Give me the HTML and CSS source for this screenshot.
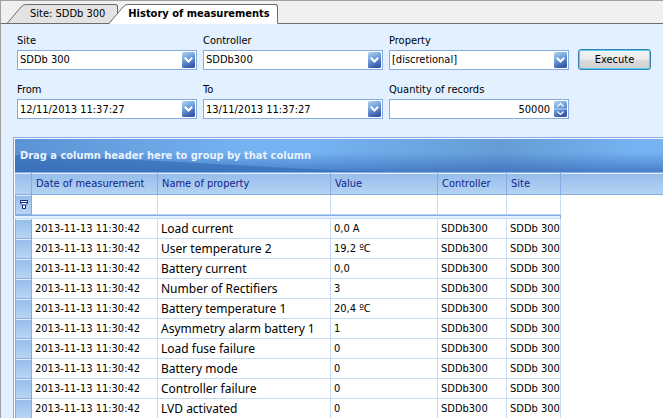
FILE: index.html
```html
<!DOCTYPE html>
<html lang="en">
<head>
<meta charset="utf-8">
<title>History of measurements</title>
<link rel="stylesheet" href="styles.css">
</head>
<body>
<svg class="defs" aria-hidden="true">
  <defs>
    <linearGradient id="blue" x1="0" y1="0" x2="0.4" y2="1">
      <stop offset="0" stop-color="#b4d3f2"/><stop offset="0.5" stop-color="#6fa0da"/><stop offset="1" stop-color="#3a5bac"/>
    </linearGradient>
    <symbol id="drop" viewBox="0 0 13 16">
      <rect width="13" height="16" rx="1.5" fill="url(#blue)"/>
      <path d="M2.8 5.8 6.5 9.5 10.2 5.8" fill="none" stroke="#fff" stroke-width="2"/>
    </symbol>
    <symbol id="spin" viewBox="0 0 13 16">
      <rect width="13" height="16" rx="1.5" fill="url(#blue)"/>
      <path d="M0 8h13" stroke="#c3dcf6" stroke-width="1"/>
      <path d="M3.5 5.5 6.5 2.5 9.5 5.5M3.5 10.5 6.5 13.5 9.5 10.5" fill="none" stroke="#fff" stroke-width="1.2"/>
    </symbol>
  </defs>
</svg>
<main class="window">
  <nav class="tabs">
    <a class="tab" href="#site">
      <svg class="slope" viewBox="0 0 19 20"><path d="M0 20 14 3Q16 .5 19 .5V19Z" fill="#e3e3e3"/><path d="M0 19.5 14 3Q16 .5 19 .5M0 19.5H19" fill="none" stroke="#6b6b6b"/></svg>
      <span class="tab-text">Site: SDDb 300</span>
    </a>
    <a class="tab active" href="#history">
      <svg class="slope" viewBox="0 0 19 20"><path d="M0 20 14 3Q16 .5 19 .5V20Z" fill="#fff"/><path d="M0 19.5 14 3Q16 .5 19 .5" fill="none" stroke="#6b6b6b"/></svg>
      <span class="tab-text">History of measurements</span>
    </a>
  </nav>
  <form class="filters">
    <div class="field">
      <label for="site">Site</label>
      <div class="box"><select id="site"><option>SDDb 300</option></select><svg class="arrow"><use href="#drop"/></svg></div>
    </div>
    <div class="field">
      <label for="controller">Controller</label>
      <div class="box"><select id="controller"><option>SDDb300</option></select><svg class="arrow"><use href="#drop"/></svg></div>
    </div>
    <div class="field">
      <label for="property">Property</label>
      <div class="box"><select id="property"><option>[discretional]</option></select><svg class="arrow"><use href="#drop"/></svg></div>
    </div>
    <button class="execute" type="button">Execute</button>
    <div class="field">
      <label for="from">From</label>
      <div class="box"><input id="from" type="text" value="12/11/2013 11:37:27"><svg class="arrow"><use href="#drop"/></svg></div>
    </div>
    <div class="field">
      <label for="to">To</label>
      <div class="box"><input id="to" type="text" value="13/11/2013 11:37:27"><svg class="arrow"><use href="#drop"/></svg></div>
    </div>
    <div class="field">
      <label for="quantity">Quantity of records</label>
      <div class="box"><input id="quantity" class="number" type="text" value="50000"><svg class="arrow"><use href="#spin"/></svg></div>
    </div>
  </form>
  <section class="grid">
    <div class="group-bar">
      <svg class="wave" viewBox="0 0 648 33" preserveAspectRatio="none"><path d="M0 16Q120 20 220 26T370 33H0Z" fill="#386fb8" fill-opacity=".7"/></svg>
      <span class="group-text">Drag a column header here to group by that column</span>
    </div>
    <table>
      <colgroup><col class="c-mark"><col class="c-date"><col class="c-name"><col class="c-value"><col class="c-ctrl"><col class="c-site"><col></colgroup>
      <thead>
        <tr class="heads"><th></th><th>Date of measurement</th><th>Name of property</th><th>Value</th><th>Controller</th><th>Site</th><th class="rest"></th></tr>
        <tr class="filter"><td class="mark"><svg class="funnel" viewBox="0 0 8 9"><path d="M.5.5h7v2.500L5.500 5v3.500h-3V5L.5 3zM.5 2.500h7M2.500 5h3" fill="#fff" stroke="#10248c"/></svg></td><td></td><td></td><td></td><td></td><td></td><td class="rest"></td></tr>
        <tr class="divider"><td colspan="6"></td><td class="rest"></td></tr>
      </thead>
      <tbody>
        <tr><td class="mark"></td><td>2013-11-13 11:30:42</td><td class="name">Load current</td><td>0,0 A</td><td>SDDb300</td><td>SDDb 300</td><td class="rest"></td></tr>
        <tr><td class="mark"></td><td>2013-11-13 11:30:42</td><td class="name">User temperature 2</td><td>19,2 ºC</td><td>SDDb300</td><td>SDDb 300</td><td class="rest"></td></tr>
        <tr><td class="mark"></td><td>2013-11-13 11:30:42</td><td class="name">Battery current</td><td>0,0</td><td>SDDb300</td><td>SDDb 300</td><td class="rest"></td></tr>
        <tr><td class="mark"></td><td>2013-11-13 11:30:42</td><td class="name">Number of Rectifiers</td><td>3</td><td>SDDb300</td><td>SDDb 300</td><td class="rest"></td></tr>
        <tr><td class="mark"></td><td>2013-11-13 11:30:42</td><td class="name">Battery temperature 1</td><td>20,4 ºC</td><td>SDDb300</td><td>SDDb 300</td><td class="rest"></td></tr>
        <tr><td class="mark"></td><td>2013-11-13 11:30:42</td><td class="name">Asymmetry alarm battery 1</td><td>1</td><td>SDDb300</td><td>SDDb 300</td><td class="rest"></td></tr>
        <tr><td class="mark"></td><td>2013-11-13 11:30:42</td><td class="name">Load fuse failure</td><td>0</td><td>SDDb300</td><td>SDDb 300</td><td class="rest"></td></tr>
        <tr><td class="mark"></td><td>2013-11-13 11:30:42</td><td class="name">Battery mode</td><td>0</td><td>SDDb300</td><td>SDDb 300</td><td class="rest"></td></tr>
        <tr><td class="mark"></td><td>2013-11-13 11:30:42</td><td class="name">Controller failure</td><td>0</td><td>SDDb300</td><td>SDDb 300</td><td class="rest"></td></tr>
        <tr><td class="mark"></td><td>2013-11-13 11:30:42</td><td class="name">LVD activated</td><td>0</td><td>SDDb300</td><td>SDDb 300</td><td class="rest"></td></tr>
      </tbody>
    </table>
  </section>
</main>
</body>
</html>
```
FILE: styles.css
```css
* { box-sizing: border-box; }
body {
  margin: 0;
  height: 100vh;
  overflow: hidden;
  font: 11px/14px "DejaVu Sans Condensed", "Noto Sans", sans-serif;
  color: #000;
}
.defs { position: absolute; width: 0; height: 0; }
.window {
  min-height: 100vh;
  background: #e2f0ff;
  border-top: 1px solid #a0a0a0;
  border-left: 1px solid #a0a0a0;
}
.tabs {
  display: flex;
  padding: 3px 0 0 6px;
  background: linear-gradient(#6b6b6b, #6b6b6b) bottom / 100% 1px no-repeat #f0f0f0;
}
.tab { display: flex; color: #000; text-decoration: none; }
.tab + .tab { margin-left: -9px; }
.slope { width: 19px; height: 20px; flex: none; }
.tab-text {
  height: 20px;
  padding: 0 12px 0 4px;
  line-height: 17px;
  border: 1px solid #6b6b6b;
  border-left: 0;
  border-radius: 0 3px 0 0;
  background: #e3e3e3;
}
.active { font-weight: bold; position: relative; }
.active .tab-text { background: #fff; border-bottom-color: #fff; padding: 0 7px 0 0; }

.filters {
  display: grid;
  grid-template-columns: repeat(3, minmax(0, 180px)) 74px;
  column-gap: 6px;
  row-gap: 13px;
  padding: 10px 0 18px 16px;
  align-items: end;
}
.field { display: flex; flex-direction: column; gap: 2px; }
.box { position: relative; display: flex; }
.box select, .box input {
  appearance: none;
  width: 100%;
  height: 20px;
  margin: 0;
  padding: 0 18px 0 2px;
  border: 1px solid #84ace0;
  border-radius: 0;
  background: #fff;
  color: #000;
  font: inherit;
}
.box .number { text-align: right; }
.arrow { position: absolute; right: 2px; top: 2px; width: 13px; height: 16px; pointer-events: none; }
.execute {
  height: 21px;
  margin-left: 3px;
  width: 73px;
  padding: 0;
  border: 1px solid #3c7fb1;
  border-radius: 3px;
  box-shadow: inset 0 0 0 1px #4fd0f5;
  background: linear-gradient(#f2f2f2, #ebebeb 48%, #dcdcdc 52%, #cfcfcf);
  color: #000;
  font: inherit;
}

.grid { margin-left: 12px; border: 1px solid #84ace0; border-width: 1px 0 0 1px; padding: 1px 0 0 1px; background: #fff; }
.group-bar {
  position: relative;
  height: 33px;
  line-height: 34px;
  padding-left: 5px;
  background:
    linear-gradient(rgba(50, 100, 180, 0) 40%, rgba(50, 100, 180, .65)),
    linear-gradient(90deg, #5b93d3, #75b3f2 36%, #75b3f2 46%, #659cd6 75%, #75b3f2 96%);
}
.wave { position: absolute; left: 0; top: 0; width: 100%; height: 33px; }
.group-text { position: relative; color: #e8f2ff; font-weight: bold; }

table { width: 100%; table-layout: fixed; border-spacing: 0; background: #fff; }
.c-mark { width: 17px; }
.c-date { width: 126px; }
.c-name { width: 173px; }
.c-value { width: 107px; }
.c-ctrl { width: 69px; }
.c-site { width: 54px; }
th, td {
  padding: 0 0 0 3px;
  text-align: left;
  font-weight: normal;
  white-space: nowrap;
  border-right: 1px solid #c7dcf6;
  border-bottom: 1px solid #c7dcf6;
}
th {
  height: 23px;
  padding-left: 4px;
  color: #10248c;
  background: linear-gradient(#94bdea, #b5d3f3);
  border-top: 1px solid #84ace0;
  border-right-color: #84ace0;
  border-bottom-color: #84ace0;
  box-shadow: inset 0 1px #e2f0ff;
}
td { height: 20px; }
.filter td { border-bottom-color: #b5d3f3; }
.divider td { height: 4px; padding: 0; background: #e2f0ff; border-top: 1px solid #84ace0; border-right-color: #84ace0; }
.mark, .filter .mark {
  padding: 0;
  text-align: center;
  background: linear-gradient(#94bdea, #b9d5f4);
  border-left: 1px solid #84ace0;
  border-right-color: #84ace0;
  border-bottom-color: #84ace0;
  box-shadow: inset 0 1px #e2f0ff;
}
.funnel { display: block; width: 8px; height: 9px; margin: 0 auto; }
.rest { border-right: 0; }
td.rest, .divider .rest { background: #fff; border: 0; }
.name { font-family: "Noto Sans", sans-serif; font-size: 12px; }
```
